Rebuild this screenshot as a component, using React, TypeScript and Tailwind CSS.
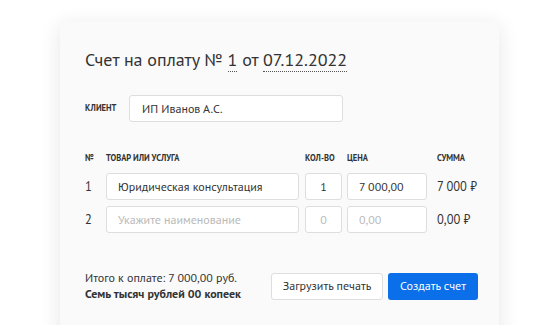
const font = { fontFamily: '"PT Sans", "Noto Sans", sans-serif' };

function Field({ value, placeholder, className }: { value?: string; placeholder?: string; className: string }) {
  return (
    <div className={`h-[27px] bg-white border border-[#dedede] rounded-[3px] flex items-center text-[12px] ${className}`}>
      {value ? <span className="text-[#333]">{value}</span> : <span className="text-[#b9b9b9]">{placeholder}</span>}
    </div>
  );
}

const rows = [
  { n: '1', name: '', nameText: 'Юридическая консультация', qty: '1', price: '7 000,00', sum: '7 000 ₽' },
  { n: '2', name: 'Укажите наименование', nameText: '', qty: '0', price: '0,00', sum: '0,00 ₽' },
];

export default function App() {
  return (
    <div className="w-[558px] h-[325px] bg-white overflow-hidden pt-[22px] pl-[60px]" style={font}>
      <div className="w-[439px] h-[320px] bg-[#fafafa] shadow-[0_4px_20px_rgba(30,40,60,0.11)] pl-[25px] pt-[26px]">
        <h1 className="text-[18px] leading-[24px] text-[#333]">
          Счет на оплату № <span className="border-b border-dotted border-[#555]">1</span> от{' '}
          <span className="border-b border-dotted border-[#555]">07.12.2022</span>
        </h1>

        <div className="flex items-center mt-[23px]">
          <div className="w-[44px] text-[8.5px] font-bold uppercase text-[#333]">Клиент</div>
          <Field value="ИП Иванов А.С." className="w-[214px] px-[12px]" />
        </div>

        <div className="mt-[29px] flex items-center text-[8.5px] font-bold uppercase text-[#333] h-[14px]">
          <div className="w-[21px]">№</div>
          <div className="w-[199px]">Товар или услуга</div>
          <div className="w-[42px]">Кол-во</div>
          <div className="w-[90px]">Цена</div>
          <div>Сумма</div>
        </div>

        <div className="mt-[8px] flex flex-col gap-[6px]">
          {rows.map(r => (
            <div key={r.n} className="flex items-center text-[12.5px] text-[#333]">
              <div className="w-[21px]">{r.n}</div>
              <Field value={r.nameText} placeholder={r.name} className="w-[193px] px-[11px] mr-[6px]" />
              <Field value={r.n === '1' ? r.qty : ''} placeholder={r.qty} className="w-[37px] justify-center mr-[5px]" />
              <Field value={r.n === '1' ? r.price : ''} placeholder={r.price} className="w-[80px] px-[11px] mr-[10px]" />
              <div>{r.sum}</div>
            </div>
          ))}
        </div>

        <div className="mt-[37px] flex items-center">
          <div className="w-[186px] text-[12px] leading-[16px] text-[#333]">
            <div>Итого к оплате: 7 000,00 руб.</div>
            <div className="font-bold">Семь тысяч рублей 00 копеек</div>
          </div>
          <button className="h-[27px] w-[112px] bg-white border border-[#dedede] rounded-[3px] text-[12px] text-[#333] mr-[5px]">
            Загрузить печать
          </button>
          <button className="h-[27px] w-[90px] bg-[#0a6fe8] rounded-[3px] text-[12px] text-white">
            Создать счет
          </button>
        </div>
      </div>
    </div>
  );
}
